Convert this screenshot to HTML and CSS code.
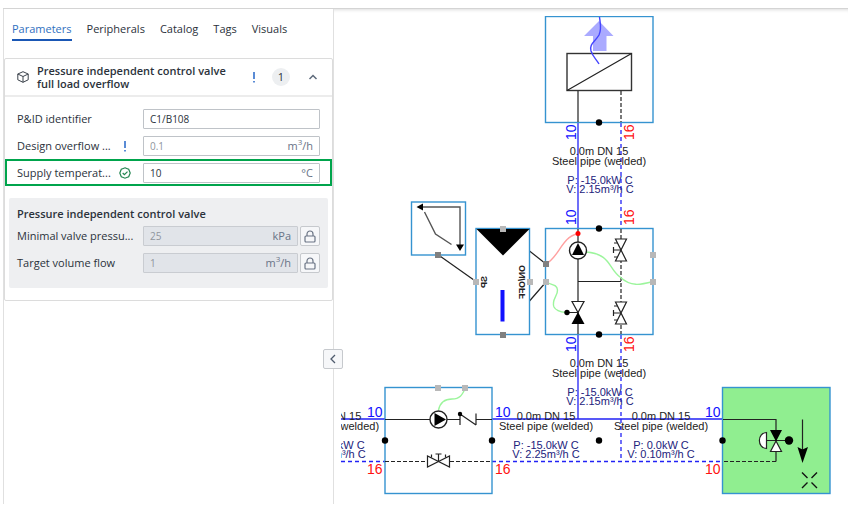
FILE: index.html
```html
<!DOCTYPE html>
<html lang="en">
<head>
<meta charset="utf-8">
<title>Parameters</title>
<link rel="stylesheet" href="styles.css">
</head>
<body>
<main class="app">
  <aside class="sidebar">
    <nav class="tabs">
      <a class="tab tab-active" href="#parameters">Parameters</a>
      <a class="tab" href="#peripherals">Peripherals</a>
      <a class="tab" href="#catalog">Catalog</a>
      <a class="tab" href="#tags">Tags</a>
      <a class="tab" href="#visuals">Visuals</a>
    </nav>
    <section class="card">
      <header class="card-header">
        <svg class="icon-cube" viewBox="0 0 12 12" aria-hidden="true"><path d="M6 .7 11.2 3v5.8L6 11.3.8 8.8V3zM.8 3 6 5.5 11.2 3M6 5.5v5.8"/></svg>
        <h2 class="card-title">Pressure independent control valve full load overflow</h2>
        <svg class="icon-alert" viewBox="0 0 4 12" aria-hidden="true"><path d="M2 1v7M2 10v1.6"/></svg>
        <span class="badge">1</span>
        <button class="toggle" type="button" aria-label="Collapse section"><svg class="icon-chevron" viewBox="0 0 10 8" aria-hidden="true"><path d="M1.5 6 5 2.5 8.500 6"/></svg></button>
      </header>
      <div class="rows">
        <div class="row">
          <label class="label" for="pid">P&amp;ID identifier</label>
          <div class="field"><input class="input" id="pid" type="text" value="C1/B108"></div>
        </div>
        <div class="row">
          <label class="label" for="overflow">Design overflow ...</label>
          <span class="state"><svg class="icon-alert" viewBox="0 0 4 12" aria-hidden="true"><path d="M2 1v7M2 10v1.6"/></svg></span>
          <div class="field"><input class="input" id="overflow" type="text" placeholder="0.1"><span class="unit">m<sup>3</sup>/h</span></div>
        </div>
        <div class="row row-highlight">
          <label class="label" for="supply">Supply temperat...</label>
          <span class="state"><svg class="icon-ok" viewBox="0 0 12 12" aria-hidden="true"><path d="M6 .8 7.700 1.500 9.700 2.300 10.500 4.300 11.200 6 10.500 7.700 9.700 9.700 7.700 10.500 6 11.200 4.300 10.500 2.300 9.700 1.500 7.700 .8 6 1.500 4.300 2.300 2.300 4.300 1.500zM3.700 6l1.700 1.700L8.500 4.600"/></svg></span>
          <div class="field"><input class="input" id="supply" type="text" value="10"><span class="unit">°C</span></div>
        </div>
      </div>
      <section class="group">
        <h3 class="group-title">Pressure independent control valve</h3>
        <div class="group-row">
          <label class="label" for="minimal">Minimal valve pressu...</label>
          <div class="field field-off"><input class="input" id="minimal" type="text" value="25" disabled><span class="unit">kPa</span></div>
          <button class="lock" type="button" aria-label="Unlock minimal valve pressure"><svg class="icon-lock" viewBox="0 0 12 13" aria-hidden="true"><rect x="1" y="6" width="10" height="6" rx="1"/><path d="M3 6V4a3 3 0 0 1 6 0v2"/></svg></button>
        </div>
        <div class="group-row">
          <label class="label" for="target">Target volume flow</label>
          <div class="field field-off"><input class="input" id="target" type="text" value="1" disabled><span class="unit">m<sup>3</sup>/h</span></div>
          <button class="lock" type="button" aria-label="Unlock target volume flow"><svg class="icon-lock" viewBox="0 0 12 13" aria-hidden="true"><rect x="1" y="6" width="10" height="6" rx="1"/><path d="M3 6V4a3 3 0 0 1 6 0v2"/></svg></button>
        </div>
      </section>
    </section>
    <button class="collapse" type="button" aria-label="Collapse panel"><svg class="icon-back" viewBox="0 0 8 10" aria-hidden="true"><path d="M6 1 2 5l4 4"/></svg></button>
  </aside>
  <section class="canvas">
    <svg class="diagram" role="img" aria-label="Piping diagram">
      <defs>
        <g id="valve"><path class="sym" d="M-11-5.500V5.500L11-5.500V5.500z"/><path class="ln" d="M0 0V-7.500M-3-7.500H3M-7-7V-4M7-7V-4"/></g>
      </defs>
      <g transform="translate(-341 -16)">
        <!-- pipes -->
        <path class="pipe" d="M578 123V228M578 335V419M330 419H385M492 419H722"/>
        <path class="pipe dash" d="M621 123V228M621 335V461M341 461.500H385M492 461.500H722"/>

        <!-- air heater -->
        <rect class="box" x="545.500" y="16.500" width="107.500" height="106"/>
        <path class="air" d="M599 21 613.500 36H606.500V51H593V36H584z"/>
        <rect class="frame" x="567" y="53.500" width="64.500" height="37"/>
        <path class="ln" d="M567 90.500 631.500 53.500M578 91V122"/>
        <path class="ln dash-dark" d="M621 91V122"/>
        <path class="swirl" d="M599.500 17C600 22 602 29 599 35C595 42 589 44 591 51C593 57 596 59 599 64"/>

        <!-- sensor and controller -->
        <path class="ln" d="M438.500 255 476 281.500M529.500 251 546 264M529.500 301 546 282"/>
        <rect class="box fill" x="411.500" y="202" width="54" height="53"/>
        <path class="curve" d="M421 207H460V246"/>
        <path class="black" d="M416.500 207 423 203.500V210.500zM460 251 456 244.500H464z"/>
        <path class="curve" d="M424.500 212 435.500 234 451.500 244.500"/>
        <rect class="box fill" x="476" y="228.500" width="53.500" height="106"/>
        <path class="black" d="M476.500 229H529.500L503 255.500z"/>
        <path class="bar" d="M502.500 290V321.500"/>
        <text class="tiny" transform="matrix(0 1 1 0 487 276)">SP</text>
        <text class="tiny" transform="matrix(0 1 1 0 525 265)">ON/OFF</text>

        <!-- mixing group -->
        <rect class="box" x="545.500" y="228.500" width="107.500" height="106"/>
        <path class="ln" d="M578 229V334M578 281.500H621M567 312.500H578"/>
        <path class="ln dash-dark" d="M621 229V334"/>
        <path class="green" d="M586 252C611 254 608 268 620 277C631 287 640 285 653 281.500"/>
        <path class="green" d="M546 282C551 285 557 284 557.500 290C558 296 551 300 554 307C556 311 561 312 566 312.500"/>
        <path class="red" d="M546 264C559 257 562 237 577 234"/>
        <circle class="ring" cx="578" cy="250.500" r="8.500"/>
        <path class="black" d="M578 243 584 255H572z"/>
        <circle class="reddot" cx="578" cy="233.500" r="2.500"/>
        <path class="sym" d="M572 301.500H584L578 312.500z"/>
        <path class="black" d="M578 312 584.500 324H571.500z"/>
        <circle cx="567" cy="312.500" r="2.700"/>
        <use href="#valve" transform="translate(621 250) rotate(-90)"/>
        <use href="#valve" transform="translate(621 313) rotate(-90)"/>

        <!-- pump group -->
        <rect class="box" x="385" y="387.500" width="107" height="106"/>
        <path class="ln" d="M385 419.500H430M447 419.500H460M476 419.500H492M460 414V425M476 413.500V425M460 414 476 425"/>
        <path class="ln dash-dark" d="M385 461.500H427M450 461.500H492"/>
        <path class="green" d="M438.500 410C440 403 445 399 452 399C460 399 462 395 465 389"/>
        <circle class="ring" cx="438.500" cy="419.500" r="8.500"/>
        <path class="black" d="M434.500 413 446 419.500 434.500 426z"/>
        <circle cx="460" cy="414" r="2.200"/>
        <use href="#valve" transform="translate(438.500 461.500)"/>

        <!-- selected consumer -->
        <rect class="box selected" x="722.500" y="387.500" width="107.500" height="106"/>
        <path class="ln" d="M723 419.500H776V430M776 452V461.500M766 440.500H789M802.500 419.500V450"/>
        <path class="ln dash-dark" d="M776 461.500H723"/>
        <path class="sym" d="M766.500 432.500C757 433 757 448 766.500 448.500z"/>
        <path class="sym" d="M776 441 781.500 451.500H770.500z"/>
        <path class="black" d="M770 430H782L776 441.500zM802.500 463 797.500 447 802.500 449.500 808 447z"/>
        <circle cx="789" cy="440.500" r="4.200"/>
        <path class="cross" d="M802 472.500 807.500 478M817 472.500 811.500 478M802 488 807.500 482.500M817 488 811.500 482.500"/>

        <!-- connection points -->
        <circle cx="599" cy="122.500" r="3.200"/><circle cx="599" cy="228.500" r="3.200"/><circle cx="599" cy="334.500" r="3.200"/>
        <circle cx="385" cy="440.500" r="3.200"/><circle cx="492" cy="440.500" r="3.200"/><circle cx="599" cy="440.500" r="3.200"/><circle cx="722.500" cy="440.500" r="3.200"/>
        <g class="port"><rect x="500" y="226" width="6" height="6"/><rect x="473" y="279" width="6" height="6"/><rect x="527" y="279" width="6" height="6"/><rect x="543" y="279" width="6" height="6"/><rect x="650" y="252" width="6" height="6"/><rect x="650" y="279" width="6" height="6"/><rect x="435" y="385" width="6" height="6"/><rect x="462" y="385" width="6" height="6"/></g>
        <g class="port-dark"><rect x="435" y="252" width="6" height="6"/><rect x="500" y="332" width="6" height="6"/><rect x="543" y="261" width="6" height="6"/></g>

        <!-- pipe temperatures -->
        <g class="supply">
          <text transform="translate(576 140) rotate(-90)">10</text>
          <text transform="translate(576 225) rotate(-90)">10</text>
          <text transform="translate(576 352) rotate(-90)">10</text>
          <text x="367" y="417">10</text><text x="495" y="417">10</text><text x="705" y="417">10</text>
        </g>
        <g class="return">
          <text transform="translate(634 140) rotate(-90)">16</text>
          <text transform="translate(634 225) rotate(-90)">16</text>
          <text transform="translate(634 352) rotate(-90)">16</text>
          <text x="367" y="474">16</text><text x="495" y="474">16</text><text x="705" y="474">10</text>
        </g>

        <!-- pipe captions -->
        <g class="caption">
          <text x="599" y="155">0.0m DN 15</text><text x="599" y="165">Steel pipe (welded)</text>
          <text x="599" y="367">0.0m DN 15</text><text x="599" y="377">Steel pipe (welded)</text>
          <text x="332" y="420">0.0m DN 15</text><text x="332" y="430">Steel pipe (welded)</text>
          <text x="546" y="420">0.0m DN 15</text><text x="546" y="430">Steel pipe (welded)</text>
          <text x="661" y="420">0.0m DN 15</text><text x="661" y="430">Steel pipe (welded)</text>
        </g>
        <g class="caption load">
          <text x="600" y="184">P: -15.0kW C</text><text x="600" y="193">V: 2.15m³/h C</text>
          <text x="600" y="396">P: -15.0kW C</text><text x="600" y="405">V: 2.15m³/h C</text>
          <text x="332" y="449">P: -15.0kW C</text><text x="332" y="458">V: 2.25m³/h C</text>
          <text x="546" y="449">P: -15.0kW C</text><text x="546" y="458">V: 2.25m³/h C</text>
          <text x="661" y="449">P: 0.0kW C</text><text x="661" y="458">V: 0.10m³/h C</text>
        </g>
      </g>
    </svg>
  </section>
</main>
</body>
</html>
```
FILE: styles.css
```css
* { box-sizing: border-box; }

body {
  margin: 0;
  padding: 8px 0 8px 3px;
  height: 100vh;
  background: #fff;
  color: #2b323b;
  font: 11px/14px "Open Sans", "Noto Sans", sans-serif;
}

svg { display: block; fill: none; }

.app {
  display: grid;
  grid-template-columns: 331px 1fr;
  height: 100%;
  border-top: 1px solid #d4d4d4;
}

.sidebar {
  position: relative;
  border: 1px solid #e0e0e0;
  border-width: 0 1px;
}

.tabs {
  display: flex;
  gap: 15px;
  height: 49px;
  padding: 12px 8px 0;
}

.tab {
  height: 20px;
  padding-top: 1px;
  color: inherit;
  text-decoration: none;
}

.tab-active {
  color: #2f6fc0;
  border-bottom: 2px solid #1a57b5;
}

.card {
  border: 1px solid #dcdcdc;
  border-radius: 2px;
  padding-bottom: 12px;
}

.card-header {
  display: flex;
  align-items: center;
  height: 38px;
  padding: 0 14px 0 12px;
  border-bottom: 2px solid #ececec;
}

.card-title {
  flex: 1;
  margin: 0 12px 0 8px;
  font-size: 11px;
  font-weight: 600;
  line-height: 13px;
}

.badge {
  width: 18px;
  margin: 0 18px 0 16px;
  border-radius: 9px;
  background: #edeff1;
  line-height: 18px;
  text-align: center;
}

.toggle {
  padding: 0;
  border: 0;
  background: none;
}

.icon-cube { width: 12px; height: 12px; stroke: #3b424b; }
.icon-alert { width: 4px; height: 12px; stroke: #2565c7; stroke-width: 1.5; }
.icon-chevron { width: 10px; height: 8px; stroke: #5f6b7c; stroke-width: 1.5; }
.icon-ok { width: 12px; height: 12px; stroke: #238551; stroke-width: 1.2; }
.icon-lock { width: 12px; height: 13px; stroke: #6b7585; stroke-width: 1.2; }
.icon-back { width: 8px; height: 10px; stroke: #4f5b6d; stroke-width: 1.3; }

.rows { padding-top: 8px; }

.row {
  display: flex;
  align-items: center;
  height: 27px;
  padding: 0 12px;
}

.row-highlight { box-shadow: inset 0 0 0 2px #00a44c; }

.row .field { flex: 0 0 177px; }

.label { flex: 1; white-space: nowrap; }

.state {
  display: flex;
  justify-content: center;
  width: 12px;
  margin-right: 12px;
}

.field {
  display: flex;
  align-items: center;
  height: 20px;
  padding: 0 6px;
  border: 1px solid #bfc3c8;
  border-radius: 1px;
}

.field-off { background: #e1e4e9; border-color: #c9ccd1; }

.input {
  flex: 1;
  min-width: 0;
  padding: 0;
  border: 0;
  background: none;
  color: #2b323b;
  font: 10px/16px "Open Sans", "Noto Sans", sans-serif;
}

.input::placeholder, .input:disabled { color: #8f959d; opacity: 1; }

.unit { color: #687386; }

.unit sup { font-size: 8px; line-height: 0; }

.group {
  display: grid;
  gap: 7px;
  margin: 12px 4px 0;
  padding: 9px 8px 15px;
  border-radius: 2px;
  background: #eeeff1;
}

.group-title {
  margin: 0 0 -2px;
  font-size: 11px;
  font-weight: 600;
  line-height: 14px;
}

.group-row {
  display: grid;
  grid-template-columns: minmax(0, 1fr) 155px 20px;
  align-items: center;
  gap: 2px;
}

.lock, .collapse {
  display: flex;
  align-items: center;
  justify-content: center;
  width: 20px;
  height: 20px;
  padding: 0;
  border: 1px solid #c6c9cd;
  border-radius: 2px;
  background: #f6f7f9;
}

.collapse {
  position: absolute;
  top: 340px;
  right: -10px;
}

.canvas {
  min-width: 0;
  padding: 7px 0 0 7px;
  box-shadow: inset 0 4px 4px -4px #ccc;
}

.diagram {
  width: 100%;
  height: 100%;
  overflow: hidden;
  font-family: "Liberation Sans", Arial, sans-serif;
}

.diagram circle { fill: #000; }
.diagram .ring { fill: #fff; stroke: #222; stroke-width: 1.4; }
.diagram .reddot { fill: #f00; }
.pipe { stroke: #2222f5; stroke-width: 1.3; }
.dash { stroke-dasharray: 4 3; }
.ln { stroke: #222; stroke-width: 1.2; }
.dash-dark { stroke-dasharray: 4 2; }
.box { stroke: #3593d0; stroke-width: 1.4; }
.fill { fill: #fff; }
.selected { fill: #90ee90; }
.frame { stroke: #333; stroke-width: 1.4; }
.air { fill: #aaf; }
.swirl { stroke: #44f; stroke-width: 1.4; }
.curve { stroke: #555; stroke-width: 1.4; }
.black { fill: #000; }
.sym { fill: #fff; stroke: #222; stroke-width: 1.2; }
.bar { stroke: #11f; stroke-width: 4; }
.green { stroke: #9cf59c; stroke-width: 1.4; }
.red { stroke: #ffa0a0; stroke-width: 1.4; }
.cross { stroke: #111; stroke-width: 1.4; }
.port { fill: #b8b8b8; }
.port-dark { fill: #808080; }
.tiny { fill: #222; font-size: 9px; font-weight: bold; }
.supply { fill: #11f; font-size: 14px; }
.return { fill: #f11; font-size: 14px; }
.caption { fill: #222; font-size: 11px; text-anchor: middle; }
.load { fill: #22227c; }
```
